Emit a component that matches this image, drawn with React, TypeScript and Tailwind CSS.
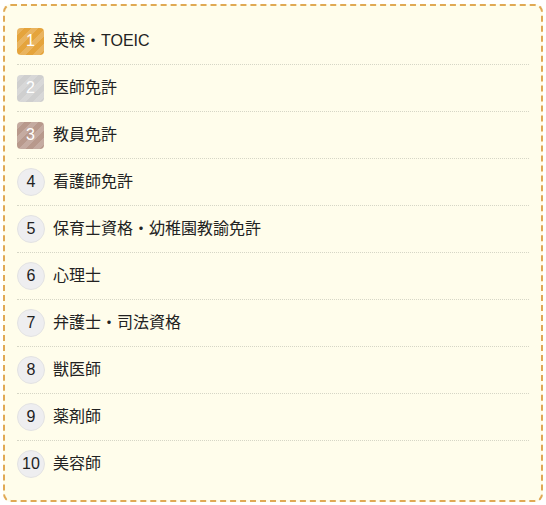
import React from 'react';

const items = [
  '英検・TOEIC',
  '医師免許',
  '教員免許',
  '看護師免許',
  '保育士資格・幼稚園教諭免許',
  '心理士',
  '弁護士・司法資格',
  '獣医師',
  '薬剤師',
  '美容師',
];

const stripe =
  'bg-[repeating-linear-gradient(135deg,rgba(255,255,255,0.18)_0_5px,transparent_5px_10px)]';

function RankBadge({ rank }: { rank: number }) {
  if (rank === 1) {
    return (
      <span className={`flex h-[27px] w-[27px] items-center justify-center rounded-[4px] bg-[#e5a43c] text-white ${stripe}`}>
        {rank}
      </span>
    );
  }
  if (rank === 2) {
    return (
      <span className={`flex h-[27px] w-[27px] items-center justify-center rounded-[4px] bg-[#cfcfcf] text-white ${stripe}`}>
        {rank}
      </span>
    );
  }
  if (rank === 3) {
    return (
      <span className={`flex h-[27px] w-[27px] items-center justify-center rounded-[4px] bg-[#b8998c] text-white ${stripe}`}>
        {rank}
      </span>
    );
  }
  return (
    <span className="flex h-[28px] w-[28px] items-center justify-center rounded-full border border-[#e3e3e3] bg-[#eeeef0] text-[#222]">
      {rank}
    </span>
  );
}

export default function App() {
  return (
    <div className="bg-white px-[3px] pt-[4px] pb-[5px]">
      <div className="rounded-[8px] border-2 border-dashed border-[#e0a954] bg-[#fffdeb] px-[12px] pt-[12px] pb-[13px]">
        <ul>
          {items.map((label, i) => (
            <li
              key={label}
              className={`flex h-[46px] items-center gap-[8px] ${
                i < items.length - 1 ? 'h-[47px] border-b border-dotted border-[#d6d6c6]' : ''
              }`}
            >
              <span className="flex w-[28px] font-['Liberation_Sans',sans-serif] text-[16px] leading-none">
                <RankBadge rank={i + 1} />
              </span>
              <span className="font-['Liberation_Sans','Noto_Sans_CJK_JP',sans-serif] text-[16px] text-[#222]">
                {label}
              </span>
            </li>
          ))}
        </ul>
      </div>
    </div>
  );
}
